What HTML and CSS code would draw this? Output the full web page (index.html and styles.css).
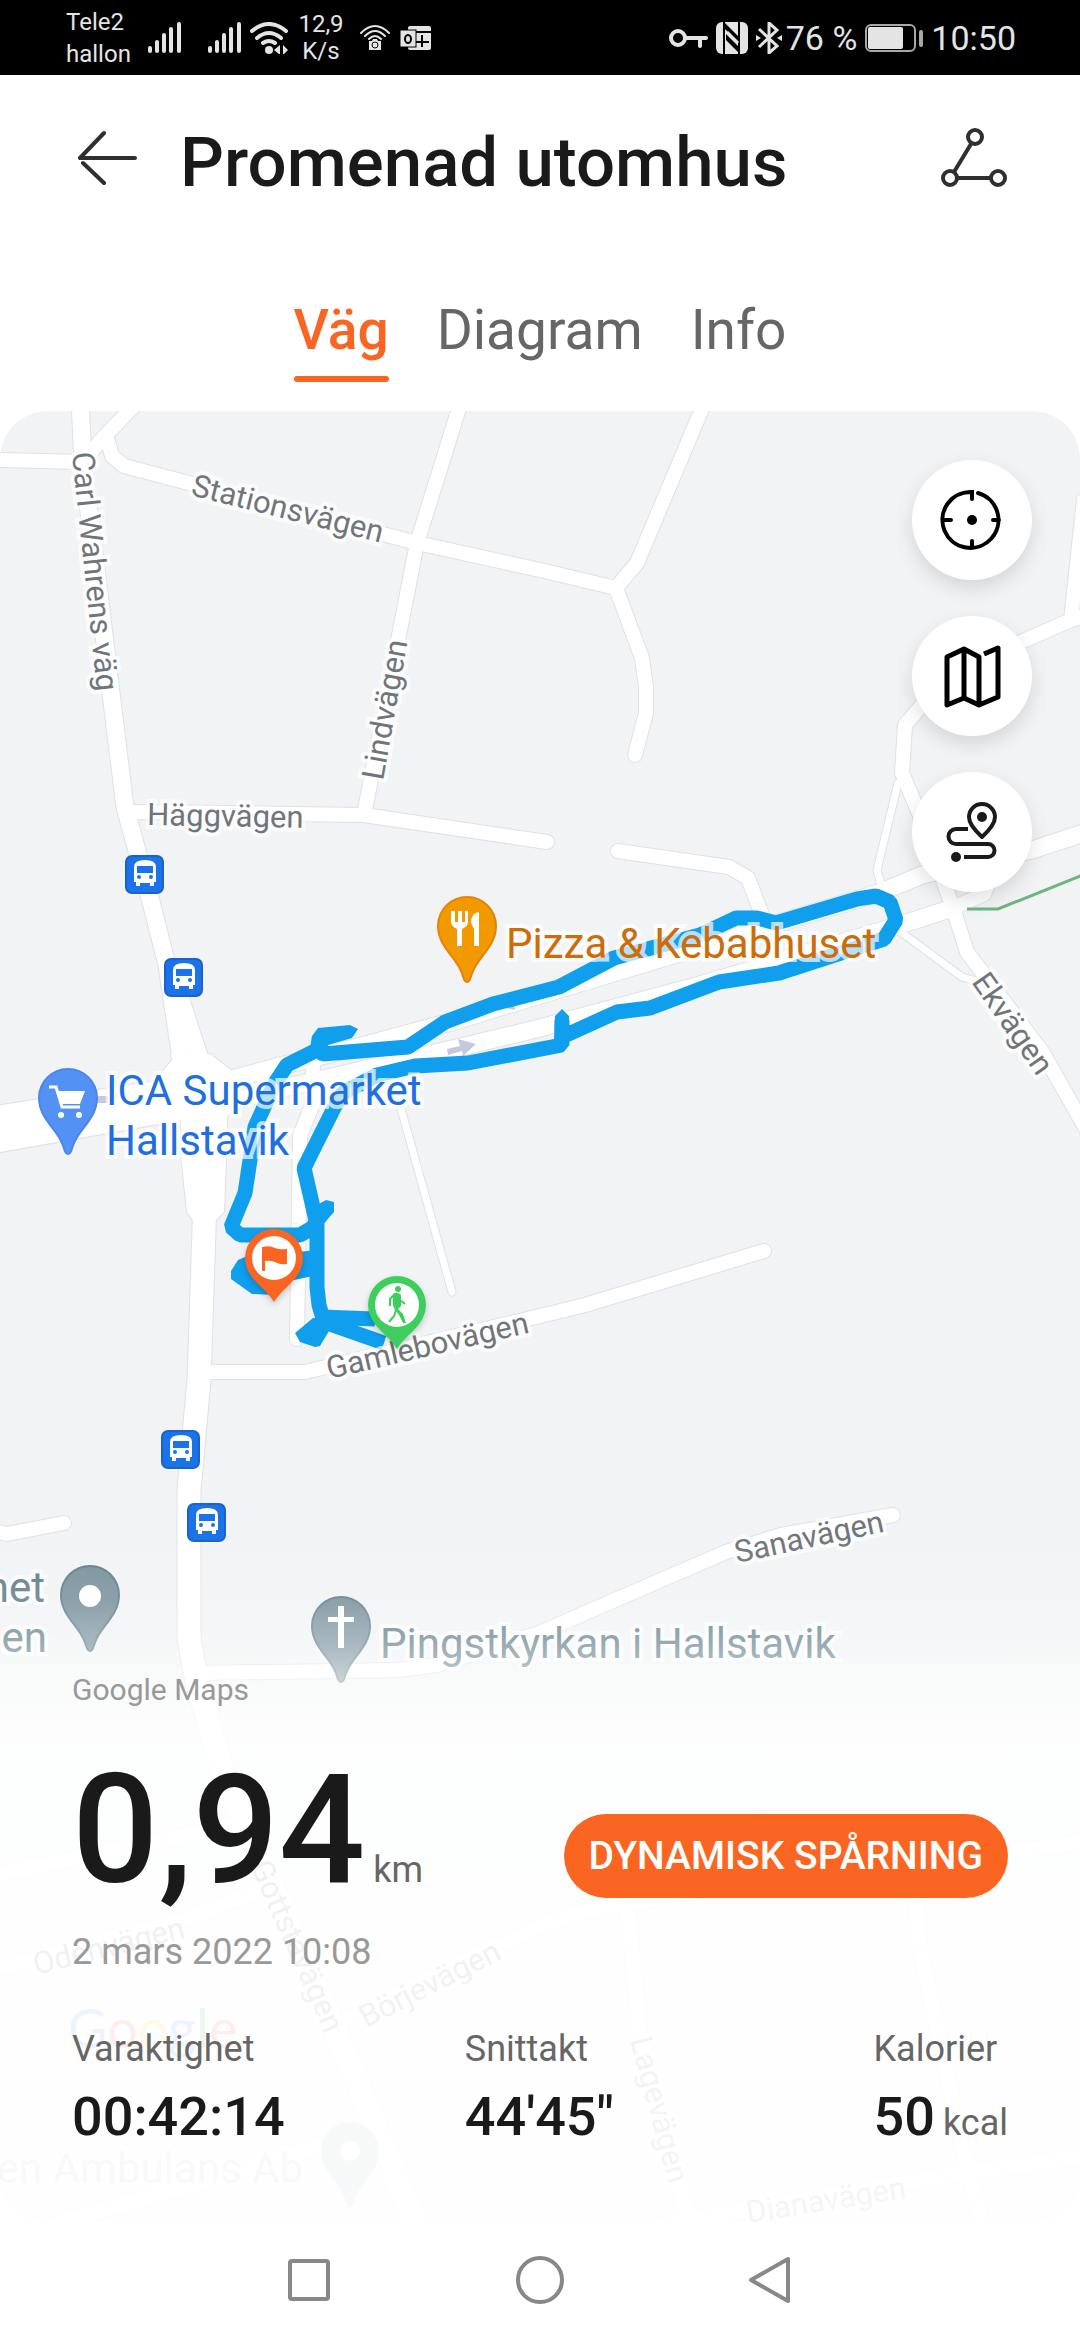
FILE: index.html
```html
<!DOCTYPE html>
<html lang="sv">
<head>
    <meta charset="UTF-8">
    <meta name="viewport" content="width=device-width, initial-scale=1.0">
    <title>Promenad utomhus</title>
    <link rel="stylesheet" href="styles.css">
</head>
<body>
    <div class="status-bar">
        <div class="status-group">
            <div class="carrier">Tele2<br>hallon</div>
            <svg class="signal" width="34" height="32" viewBox="0 0 34 32"><path d="M2 29v-3M9 29v-9M16 29V13M23 29V7M31 29V2" stroke="#e4e4e4" stroke-width="4" stroke-linecap="round"/></svg>
            <svg class="signal" width="34" height="32" viewBox="0 0 34 32"><path d="M2 29v-3M9 29v-9M16 29V13M23 29V7M31 29V2" stroke="#e4e4e4" stroke-width="4" stroke-linecap="round"/></svg>
            <svg class="wifi" width="38" height="32" viewBox="0 0 38 32"><g fill="none" stroke="#e4e4e4" stroke-width="4" stroke-linecap="round"><path d="M2 9Q19-5 36 9M7 16Q19 6 31 16M13 21Q19 17 25 21"/></g><circle cx="19" cy="28" r="4" fill="#e4e4e4"/><path d="M24 28l6-5v10zM38 28l-5-5v10z" fill="#e4e4e4"/></svg>
            <div class="speed">12,9<br>K/s</div>
            <svg class="cast" width="30" height="28" viewBox="0 0 30 28"><g fill="none" stroke="#e4e4e4" stroke-width="2" stroke-linecap="round"><path d="M1 9Q15-5 29 9M5 12Q15 2 25 12M9 15Q15 9 21 15"/></g><path d="M9 17h3l1-2h4l1 2h3v9H9z" fill="#e4e4e4"/><circle cx="15" cy="21" r="3" fill="none" stroke="#000" stroke-width="1"/></svg>
            <svg width="31" height="26" viewBox="0 0 31 26"><rect x="8" y="1" width="23" height="24" rx="2" fill="#e4e4e4"/><path d="M16 7h15M22 10v12M16 17h13" stroke="#000" stroke-width="2"/><rect x="0" y="5" width="16" height="17" fill="#e4e4e4" stroke="#000" stroke-width="1"/><ellipse cx="8" cy="14" rx="3" ry="4" fill="none" stroke="#000" stroke-width="2"/></svg>
        </div>
        <div class="status-group">
            <svg class="key" width="39" height="20" viewBox="0 0 39 20"><path d="M17 10h20M31 10v8" stroke="#e4e4e4" stroke-width="4" stroke-linecap="round"/><circle cx="9" cy="10" r="7" fill="none" stroke="#e4e4e4" stroke-width="4"/></svg>
            <svg class="nfc" width="32" height="32" viewBox="0 0 32 32"><rect width="32" height="32" rx="6" fill="#e4e4e4"/><path d="M8 0v32M23 0v32" stroke="#000" stroke-width="2"/><path d="M8 0l14 14v6L8 6zM24 32L10 18v-6l14 14z" fill="#000"/><path d="M11 10l11 11" stroke="#e4e4e4" stroke-width="3"/></svg>
            <svg class="bluetooth" width="26" height="32" viewBox="0 0 26 32"><path d="M3 7l18 17-8 7V1l8 7L3 25" fill="none" stroke="#e4e4e4" stroke-width="3"/><path d="M0 13l5 3-5 3zM26 13l-5 3 5 3z" fill="#e4e4e4"/></svg>
            <span>76 %</span>
            <svg class="battery" width="58" height="28" viewBox="0 0 58 28"><rect x="1" y="1" width="49" height="26" rx="5" fill="none" stroke="#a8a8a8" stroke-width="2"/><rect x="3" y="3" width="35" height="22" rx="2" fill="#e4e4e4"/><rect x="54" y="6" width="4" height="17" rx="2" fill="#a8a8a8"/></svg>
            <span>10:50</span>
        </div>
    </div>

    <header class="header">
        <button class="icon-button" aria-label="Tillbaka">
            <svg width="60" height="56" viewBox="0 0 60 56"><path d="M26 3L2 28h55M5 33l21 20" fill="none" stroke="#2f2f2f" stroke-width="4" stroke-linecap="round" stroke-linejoin="round"/></svg>
        </button>
        <h1>Promenad utomhus</h1>
        <button class="icon-button" aria-label="Dela">
            <svg width="68" height="62" viewBox="0 0 68 62"><g fill="none" stroke="#2f2f2f" stroke-width="4"><circle cx="35" cy="10" r="7"/><circle cx="10" cy="51" r="7"/><circle cx="58" cy="51" r="7"/><path d="M31 17L14 45M17 51h34"/></g></svg>
        </button>
    </header>

    <nav class="tabs">
        <a href="#vag" class="tab active">Väg</a>
        <a href="#diagram" class="tab">Diagram</a>
        <a href="#info" class="tab">Info</a>
    </nav>

    <main class="map" id="vag">
        <svg class="map-canvas" viewBox="0 411 1080 1811" preserveAspectRatio="xMidYMin slice">
            <defs>
                <g id="paths">
                    <path d="M898 783L877 870L884 896M898 930L962 977L976 981M400 1105L452 1292"/>
                </g>
                <g id="streets">
                    <path d="M0 460L84 462M134 406L103 438L86 458M107 438L112 456L124 466L417 543L540 570L616 588L637 563L704 404"/>
                    <path d="M616 588L642 658L646 687V713L635 755"/>
                    <path d="M460 405L417 543L364 815M125 812L220 813L364 815L547 842"/>
                    <path d="M618 851L729 867L748 878L764 920M1000 651L1071 620L1090 614M1071 620L1084 500M935 690L905 725L902 773L919 813L953 908L967 952L1043 1053L1090 1136"/>
                    <path d="M953 908L984 894L998 860M313 1064V1103L300 1136L297 1339"/>
                    <path d="M203 1372H305L540 1316L585 1305L764 1251M-10 1530L7 1534L64 1523"/>
                    <path d="M196 1673L399 1670L437 1665L540 1633L585 1613L726 1552L781 1535L893 1515"/>
                    <path d="M-10 1876L207 1831L245 1820M-10 1971L189 1918L265 1888M335 2025L540 1926L595 1908L700 1892L1022 1850L1090 1841"/>
                    <path d="M628 1910L640 2033L692 2235M914 1860L919 1943L967 2167L986 2235M600 2240L690 2220L960 2173L1090 2156M60 2222L210 2180L340 2140"/>
                </g>
                <g id="lanes">
                    <path d="M225 1081L280 1066L358 1047L458 1020L540 995L879 893L922 875L1032 850L1090 831"/>
                    <path d="M215 1106L280 1089L448 1050L540 1028L700 985L884 930L953 908"/>
                    <path d="M80 400L83 462L111 693L125 807L150 898L167 965L182 1065M176 985L202 1065"/>
                </g>
                <g id="highway">
                    <path d="M205 1200L199 1380L189 1490V1637L195 1673L208 1720L224 1775L255 1850L310 1973L365 2100L424 2245"/>
                </g>
                <g id="junction">
                    <path d="M-5 1106L155 1081L172 1060L171 1054H210L231 1070L240 1095L227 1118L226 1160L224 1212L216 1220H193L187 1212L181 1155V1120L-5 1153Z"/>
                </g>
            </defs>

            <g class="casing">
                <use href="#paths" stroke-width="9"/>
                <use href="#streets" stroke-width="16"/>
                <use href="#lanes" stroke-width="19"/>
                <use href="#highway" stroke-width="25"/>
                <use href="#junction" stroke-width="2"/>
            </g>
            <g class="surface">
                <use href="#paths" stroke-width="7"/>
                <use href="#streets" stroke-width="14"/>
                <use href="#lanes" stroke-width="17"/>
                <use href="#highway" stroke-width="23"/>
                <use href="#junction" class="filled"/>
            </g>
            <path class="trail" d="M967 909H998L1085 874"/>
            <path d="M447 1049L460 1046L458 1039L476 1044L463 1056L462 1051L448 1055ZM506 1008L515 1004V1010ZM92 1096H108V1103H92Z" fill="#c6c8dc"/>

            <!-- walked route -->
            <g class="route">
                <path d="M384 1343L324 1322L319 1305L317 1287V1225L304 1168L335 1106L343 1093L377 1075L415 1066L468 1063L562 1045V1020M562 1037L617 1012L650 1008L719 982L779 973L884 939L896 920L890 902L876 896L857 899L776 923L757 918H736L700 935L614 958L559 987L493 1004L445 1022L408 1047L323 1054L317 1050L287 1065L275 1083L255 1127L250 1160L245 1193L231 1227L240 1235H300L312 1228L326 1208"/>
                <path d="M320 1317L375 1319" />
            </g>
            <path class="route-fill" d="M309 1054L312 1036L318 1028L350 1025L358 1029L352 1038L328 1045L325 1058ZM231 1271L238 1260L245 1257L318 1250V1275L275 1284V1295L252 1294L231 1279ZM313 1318L295 1333L300 1342L315 1347L320 1346L329 1331L345 1318ZM555 1016L562 1009L569 1016V1045H554ZM317 1205L326 1200L334 1202V1212L326 1221L310 1235Z"/>

            <g class="street-labels">
                <text transform="translate(72 453) rotate(84)">Carl Wahrens väg</text>
                <text transform="translate(190 495) rotate(14)">Stationsvägen</text>
                <text transform="translate(383 781) rotate(-80)">Lindvägen</text>
                <text transform="translate(147 825) rotate(1)">Häggvägen</text>
                <text transform="translate(971 982) rotate(55)">Ekvägen</text>
                <text transform="translate(329 1379) rotate(-13)">Gamlebovägen</text>
                <text transform="translate(737 1563) rotate(-12)">Sanavägen</text>
                <text transform="translate(36 1975) rotate(-14)">Odenvägen</text>
                <text transform="translate(250 1866) rotate(66)">Gottstavägen</text>
                <text transform="translate(366 2028) rotate(-27)">Börjevägen</text>
                <text transform="translate(630 2040) rotate(75)">Lagevägen</text>
                <text transform="translate(748 2223) rotate(-9)">Dianavägen</text>
            </g>

            <g class="place-labels">
                <text x="506" y="958" fill="#cc6c0a">Pizza &amp; Kebabhuset</text>
                <text x="106" y="1105" fill="#1f6fe0">ICA Supermarket</text>
                <text x="106" y="1155" fill="#1f6fe0">Hallstavik</text>
                <text x="45" y="1602" text-anchor="end" fill="#607d8b">net</text>
                <text x="47" y="1652" text-anchor="end" fill="#607d8b">en</text>
                <text x="380" y="1658" fill="#607d8b">Pingstkyrkan i Hallstavik</text>
                <text x="303" y="2183" text-anchor="end" fill="#a5b4bb">en Ambulans Ab</text>
            </g>
            <text class="google" x="68" y="2048"><tspan fill="#4285f4">G</tspan><tspan fill="#ea4335">o</tspan><tspan fill="#fbbc05">o</tspan><tspan fill="#4285f4">g</tspan><tspan fill="#34a853">l</tspan><tspan fill="#ea4335">e</tspan></text>

            <defs>
                <path id="pin" d="M0 56C-4 56-3 50-7 43C-13 30-29 19-29 0A29 29 0 1 1 29 0C29 19 13 30 7 43C3 50 4 56 0 56Z"/>
                <g id="bus">
                    <rect x="1" y="1" width="37" height="37" rx="6" fill="#1a73e8" stroke="#1b62c9" stroke-width="2"/>
                    <path d="M9 12Q9 5 20 5Q31 5 31 12V27H29V31H25V28H15V31H11V27H9Z" fill="#fff"/>
                    <rect x="12" y="11" width="16" height="7" fill="#1a73e8"/>
                    <circle cx="14" cy="22" r="2" fill="#1a73e8"/><circle cx="26" cy="22" r="2" fill="#1a73e8"/>
                </g>
                <path id="marker" d="M0 44Q-5 36-15 27Q-29 14-29 0A29 29 0 1 1 29 0Q29 14 15 27Q5 36 0 44Z"/>
            </defs>
            <use href="#bus" x="125" y="855"/>
            <use href="#bus" x="164" y="958"/>
            <use href="#bus" x="161" y="1430"/>
            <use href="#bus" x="187" y="1503"/>

            <g transform="translate(467 926)">
                <use href="#pin" fill="#f29900" stroke="#e58209" stroke-width="2"/>
                <path d="M-16-15V-4Q-16 0-10 3V20H-5V3Q1 0 1-4V-15H-2V-4H-5V-15H-9V-4H-12V-15ZM12-14Q4-13 4-3L7 3V20H12Z" fill="#fff"/>
            </g>
            <g transform="translate(68 1098)">
                <use href="#pin" fill="#5491f5" stroke="#4a86ec" stroke-width="2"/>
                <path d="M-19-11H-12L-6 9H12" fill="none" stroke="#fff" stroke-width="3"/>
                <path d="M-12-7H17L12 6H-7Z" fill="#fff"/>
                <circle cx="-7" cy="17" r="3" fill="#fff"/><circle cx="11" cy="17" r="3" fill="#fff"/>
            </g>
            <g transform="translate(90 1595)">
                <use href="#pin" fill="#78909c" stroke="#607d8b" stroke-width="2"/>
                <circle cy="1" r="11" fill="#fff"/>
            </g>
            <g transform="translate(341 1626)">
                <use href="#pin" fill="#78909c" stroke="#607d8b" stroke-width="2"/>
                <path d="M-3-20H3V-9H13V-4H3V22H-3V-4H-13V-9H-3Z" fill="#fff"/>
            </g>
            <g transform="translate(350 2151)">
                <use href="#pin" fill="#a0aeb6"/>
                <circle r="10" fill="#fff"/>
            </g>

            <!-- finish and start -->
            <g class="marker" transform="translate(274 1258)">
                <use href="#marker" fill="#fb6522"/>
                <circle r="22" fill="#fff"/>
                <path d="M-12-11Q-4-13 1-10Q6-8 13-9V6Q6 7 1 4Q-4 2-9 3V13H-12Z" fill="#fb6522"/>
            </g>
            <g class="marker" transform="translate(397 1305)">
                <use href="#marker" fill="#3dce5d"/>
                <circle r="22" fill="#fff"/>
                <circle cx="1" cy="-16" r="3" fill="#3dce5d"/>
                <path d="M-4-11Q0-14 4-10L4 1L1 4L6 9L9 18H6L2 10L-2 5L-4 0Z" fill="#3dce5d"/>
                <path d="M-3-10L-7-6V1M3-5L8-1M-1 5L-3 11L-8 17" fill="none" stroke="#3dce5d" stroke-width="2"/>
            </g>
        </svg>

        <div class="map-tools">
            <button class="tool" aria-label="Centrera">
                <svg width="120" height="120" viewBox="0 0 120 120"><g fill="none" stroke="#000" stroke-width="4" stroke-linecap="round"><path d="M60 39V32A28 28 0 1 0 66 33M60 81v7M33 60h6M81 60h6"/></g><circle cx="60" cy="60" r="5"/></svg>
            </button>
            <button class="tool" aria-label="Karttyp">
                <svg width="120" height="120" viewBox="0 0 120 120"><path d="M72 38L86 32V81L67 89L52 82L35 89V41L52 33L67 41V88M52 33V82" fill="none" stroke="#000" stroke-width="5" stroke-linejoin="round"/></svg>
            </button>
            <button class="tool" aria-label="Rutt">
                <svg width="120" height="120" viewBox="0 0 120 120"><g fill="none" stroke="#1a1a1a" stroke-width="4" stroke-linejoin="round"><path d="M70 65Q57 53 57 45A13 13 0 0 1 83 45Q83 53 70 65ZM56 57H44A7 7 0 0 0 44 72H76A6 6 0 0 1 76 85H52"/></g><circle cx="70" cy="45" r="5" fill="#1a1a1a"/><circle cx="44" cy="85" r="5" fill="#1a1a1a"/></svg>
            </button>
        </div>

        <section class="summary">
            <p class="attribution">Google Maps</p>
            <div class="distance-row">
                <p class="distance">0,94<span class="unit">km</span></p>
                <button class="track-button">DYNAMISK SPÅRNING</button>
            </div>
            <p class="date">2 mars 2022 10:08</p>
            <dl class="stats">
                <div>
                    <dt>Varaktighet</dt>
                    <dd>00:42:14</dd>
                </div>
                <div>
                    <dt>Snittakt</dt>
                    <dd>44'45"</dd>
                </div>
                <div>
                    <dt>Kalorier</dt>
                    <dd>50<span class="unit">kcal</span></dd>
                </div>
            </dl>
        </section>
    </main>

    <div class="system-nav">
        <button aria-label="Senaste"><svg width="48" height="48" viewBox="0 0 48 48"><rect x="5" y="5" width="38" height="38" rx="2"/></svg></button>
        <button aria-label="Hem"><svg width="48" height="48" viewBox="0 0 48 48"><circle cx="24" cy="24" r="22"/></svg></button>
        <button aria-label="Bakåt"><svg width="48" height="48" viewBox="0 0 48 48"><path d="M41 3V45L4 24Z"/></svg></button>
    </div>
</body>
</html>
```
FILE: styles.css
```css
* {
    box-sizing: border-box;
}
body {
    margin: 0;
    min-height: 100vh;
    display: flex;
    flex-direction: column;
    background-color: #fff;
    color: #1a1a1a;
    font-family: Roboto, "Liberation Sans", sans-serif;
}
h1, p, dl, dd {
    margin: 0;
}
svg {
    display: block;
}
button {
    padding: 0;
    border: none;
    background: none;
    font-family: inherit;
    cursor: pointer;
}

/* status bar */
.status-bar {
    display: flex;
    justify-content: space-between;
    height: 75px;
    padding: 0 64px 0 66px;
    background-color: #000;
    color: #e4e4e4;
    font-size: 34px;
}
.status-group {
    display: flex;
    align-items: center;
}
.carrier {
    width: 82px;
    font-size: 24px;
    line-height: 32px;
}
.signal {
    margin-right: 26px;
}
.signal + .signal {
    margin-right: 8px;
}
.speed {
    width: 66px;
    margin-right: 6px;
    font-size: 24px;
    line-height: 27px;
    text-align: center;
}
.cast {
    margin-right: 10px;
}
.battery {
    margin: 0 8px;
}
.key, .nfc {
    margin-right: 8px;
}
.bluetooth {
    margin-right: 4px;
}

/* title and tabs */
.header {
    display: flex;
    align-items: center;
    padding: 48px 72px 0 78px;
}
.icon-button {
    padding-bottom: 10px;
}
.header h1 {
    flex: 1;
    margin-left: 42px;
    font-size: 69px;
    font-weight: 500;
    line-height: 80px;
}
.tabs {
    display: flex;
    justify-content: center;
    gap: 48px;
    margin: 95px 0 29px;
}
.tab {
    display: flex;
    flex-direction: column;
    color: #666;
    font-size: 55px;
    line-height: 64px;
    text-decoration: none;
}
.tab::after {
    content: "";
    height: 6px;
    margin-top: 14px;
    border-radius: 3px;
}
.tab.active {
    color: #fb6522;
    font-weight: 500;
}
.tab.active::after {
    background-color: #fb6522;
}

/* map */
.map {
    position: relative;
    flex: 1;
    display: flex;
    flex-direction: column;
    overflow: hidden;
    border-radius: 48px;
    background-color: #f1f3f4;
}
.map-canvas {
    position: absolute;
    inset: 0;
    width: 100%;
    height: 100%;
}
.casing, .surface {
    fill: none;
    stroke-linecap: round;
    stroke-linejoin: round;
}
.casing {
    stroke: #dfe1e5;
}
.surface {
    stroke: #fff;
}
.filled {
    fill: #fff;
    stroke: none;
}
.trail {
    fill: none;
    stroke: #6fb581;
    stroke-width: 3;
}
.route {
    fill: none;
    stroke: #109fed;
    stroke-width: 15;
    stroke-linejoin: bevel;
}
.route-fill {
    fill: #109fed;
}
.street-labels, .place-labels {
    paint-order: stroke;
    stroke: rgba(255, 255, 255, 0.7);
    stroke-width: 8;
}
.street-labels {
    fill: #70757a;
    font-size: 31px;
}
.place-labels {
    font-size: 42px;
}
.google {
    font-family: Lato, sans-serif;
    font-size: 54px;
}
.marker {
    filter: drop-shadow(0 3px 3px rgba(0, 0, 0, 0.2));
}
.map-tools {
    position: relative;
    display: flex;
    flex-direction: column;
    align-self: flex-end;
    gap: 36px;
    padding: 49px 48px 0 0;
}
.tool {
    width: 120px;
    height: 120px;
    border-radius: 50%;
    background-color: #fff;
    box-shadow: 0 8px 20px rgba(0, 0, 0, 0.12);
}

/* workout summary */
.summary {
    position: relative;
    margin-top: auto;
    padding: 135px 72px 73px;
    background: linear-gradient(rgba(255, 255, 255, 0), rgba(255, 255, 255, 0.15) 65px, rgba(255, 255, 255, 0.36) 110px, rgba(255, 255, 255, 0.6) 145px, rgba(255, 255, 255, 0.88) 205px, rgba(255, 255, 255, 0.93));
}
.attribution {
    color: #999;
    font-size: 30px;
    line-height: 40px;
}
.distance-row {
    display: flex;
    justify-content: space-between;
    align-items: flex-end;
    margin: 40px 0 20px;
}
.distance {
    font-size: 152px;
    font-weight: 500;
    line-height: 160px;
}
.unit {
    margin-left: 8px;
    color: #666;
    font-size: 36px;
    font-weight: 400;
    line-height: 36px;
}
.track-button {
    height: 84px;
    margin-bottom: 12px;
    padding: 0 25px;
    border-radius: 42px;
    background-color: #fb6522;
    color: #fff;
    font-size: 39px;
    font-weight: 500;
}
.date {
    color: #999;
    font-size: 36px;
    line-height: 44px;
}
.stats {
    display: grid;
    grid-template-columns: 49fr 51fr auto;
    margin-top: 53px;
}
.stats dt {
    color: #666;
    font-size: 36px;
    line-height: 44px;
}
.stats dd {
    margin-top: 14px;
    font-size: 54px;
    font-weight: 500;
    line-height: 64px;
}

/* android buttons */
.system-nav {
    display: flex;
    justify-content: center;
    gap: 183px;
    padding: 34px 0 36px;
}
.system-nav svg {
    fill: none;
    stroke: #888;
    stroke-width: 4;
    stroke-linejoin: round;
}
```
